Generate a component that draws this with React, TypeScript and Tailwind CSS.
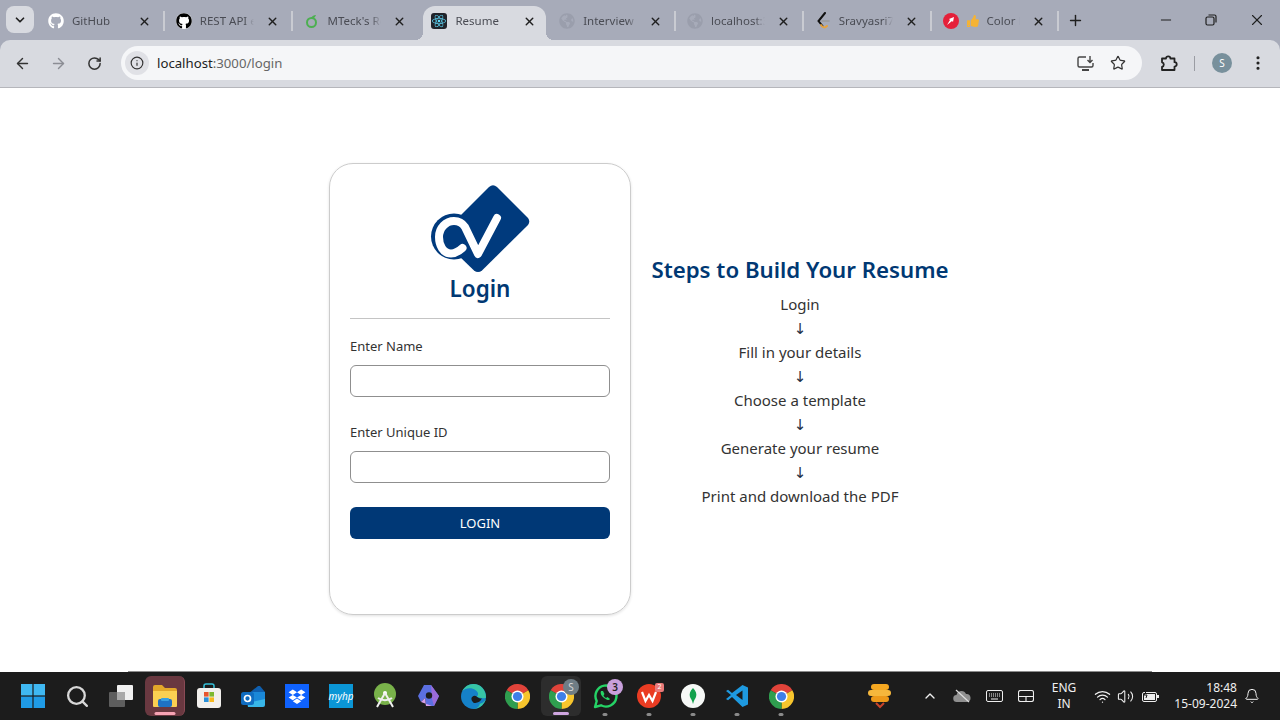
import type { ReactNode } from "react";
import { ArrowLeft, ArrowRight, RotateCw, Info, Star, X, Minus, Plus, ChevronDown, ChevronUp, Wifi, Volume2, Bell, EllipsisVertical, Search } from "lucide-react";
import { FaGithub, FaReact, FaThumbsUp, FaGlobeAmericas } from "react-icons/fa";

const GithubWhite = () => <FaGithub className="text-white" size={16} />;
const GithubDark = () => (
  <span className="flex h-4 w-4 items-center justify-center rounded-full bg-white">
    <FaGithub className="text-black" size={16} />
  </span>
);
const Sprout = () => (
  <svg width="16" height="16" viewBox="0 0 16 16" fill="none">
    <circle cx="7.5" cy="9.5" r="4.5" stroke="#4caf50" strokeWidth="2" />
    <path d="M7 5c1-2 3-3 5-3-.5 2-2 3-4 4z" fill="#4caf50" />
  </svg>
);
const ReactFav = () => (
  <span className="flex h-4 w-4 items-center justify-center rounded-[3px] bg-[#20232a]">
    <FaReact className="text-[#61dafb]" size={14} />
  </span>
);
const Globe = () => <FaGlobeAmericas className="text-[#9a9eac]" size={16} />;
const LeetCode = () => (
  <svg width="16" height="18" viewBox="0 0 16 18" fill="none">
    <path d="M10 1 3.5 9l4 5" stroke="#111" strokeWidth="2" strokeLinecap="round" />
    <path d="M7 9h7" stroke="#9a9a9a" strokeWidth="1.6" strokeLinecap="round" />
    <path d="M6 13c2 3 4 3 6 1" stroke="#e8a33d" strokeWidth="2" strokeLinecap="round" />
  </svg>
);
const RedArrow = () => (
  <svg width="16" height="16" viewBox="0 0 16 16">
    <circle cx="8" cy="8" r="8" fill="#e5203a" />
    <path d="M4 12 7 7l-1-1 5-2-1 5-1-1z" fill="#fff" />
  </svg>
);

const tabs: { title: string; icons: ReactNode[]; active?: boolean; sep?: boolean }[] = [
  { title: "GitHub", icons: [<GithubWhite key="g" />], sep: true },
  { title: "REST API endpoints", icons: [<GithubDark key="g" />], sep: true },
  { title: "MTeck's Resume", icons: [<Sprout key="s" />] },
  { title: "Resume", icons: [<ReactFav key="r" />], active: true },
  { title: "Interview Schedule", icons: [<Globe key="g" />], sep: true },
  { title: "localhost:3000/home", icons: [<Globe key="g" />], sep: true },
  { title: "Sravyasri7f - LeetCode", icons: [<LeetCode key="l" />], sep: true },
  {
    title: "Color Hunt",
    icons: [<RedArrow key="r" />, <FaThumbsUp key="t" className="text-[#f5b335]" size={12} />],
    sep: true,
  },
];

const Tab = ({ title, icons, active, sep }: (typeof tabs)[number]) => (
  <div className={active
    ? "relative ml-[3px] mr-[1.8px] flex h-[34px] w-[123px] shrink-0 items-center rounded-t-xl bg-[#d8dae0] pb-1 pl-[8px]"
    : "relative flex h-[34px] w-[127.8px] shrink-0 items-center pb-1 pl-[11px]"}>
    {active && (
      <>
        <span className="absolute bottom-0 -left-2 h-2 w-2 bg-[radial-gradient(circle_at_0_0,transparent_8px,#d8dae0_8px)]" />
        <span className="absolute bottom-0 -right-2 h-2 w-2 bg-[radial-gradient(circle_at_100%_0,transparent_8px,#d8dae0_8px)]" />
      </>
    )}
    <span className="flex shrink-0 items-center gap-2">{icons}</span>
    <span className="ml-2 min-w-0 flex-1 overflow-hidden whitespace-nowrap text-[11.5px] text-[#4a4c54] [mask-image:linear-gradient(to_right,black_82%,transparent_100%)]">
      {title}
    </span>
    <X size={13} strokeWidth={2.6} className={active ? "ml-[12px] mr-[10px] shrink-0 text-[#1f1f1f]" : "mx-[12px] shrink-0 text-[#1f1f1f]"} />
    {!active && (sep ? <span className="h-5 w-[2px] shrink-0 bg-[#c9cbd2]" /> : <span className="w-[2px] shrink-0" />)}
  </div>
);

const Chrome = () => (
  <svg width="25" height="25" viewBox="0 0 24 24">
    <path d="M12 12 1.6 6A12 12 0 0 1 22.4 6z" fill="#e0433a" />
    <path d="M12 12 22.4 6A12 12 0 0 1 12 24z" fill="#f7c52d" />
    <path d="M12 12 12 24A12 12 0 0 1 1.6 6z" fill="#2f9e4f" />
    <circle cx="12" cy="12" r="5.8" fill="#fff" />
    <circle cx="12" cy="12" r="4.4" fill="#3f7fe8" />
  </svg>
);

const icons = {
  windows: (
    <svg width="24" height="24" viewBox="0 0 24 24">
      <rect x="0" y="0" width="11.4" height="11.4" fill="#3fb8f2" />
      <rect x="12.6" y="0" width="11.4" height="11.4" fill="#3fb8f2" />
      <rect x="0" y="12.6" width="11.4" height="11.4" fill="#1f9be6" />
      <rect x="12.6" y="12.6" width="11.4" height="11.4" fill="#1f9be6" />
    </svg>
  ),
  taskView: (
    <svg width="26" height="24" viewBox="0 0 26 24">
      <rect x="9" y="1" width="16" height="15" rx="1" fill="#f0f0f0" />
      <rect x="1" y="8" width="16" height="15" rx="1" fill="#5e5e5e" />
      <rect x="9" y="8" width="8" height="8" fill="#a9a9a9" />
    </svg>
  ),
  explorer: (
    <svg width="26" height="24" viewBox="0 0 26 24">
      <path d="M1 3a2 2 0 0 1 2-2h7l3 3h10a2 2 0 0 1 2 2v4H1z" fill="#e3a72a" />
      <path d="M1 7h24v15a1 1 0 0 1-1 1H2a1 1 0 0 1-1-1z" fill="#fbd052" />
      <rect x="6" y="15" width="14" height="8" rx="2" fill="#1f72c4" />
      <rect x="9" y="14" width="8" height="3" rx="1" fill="#3aa0e0" />
    </svg>
  ),
  store: (
    <svg width="24" height="26" viewBox="0 0 24 26">
      <path d="M7 6V3a2 2 0 0 1 2-2h6a2 2 0 0 1 2 2v3" fill="none" stroke="#35c0d8" strokeWidth="1.5" />
      <rect x="0" y="5" width="24" height="20" rx="3" fill="#f1efec" />
      <rect x="7" y="9" width="4.6" height="4.6" fill="#e8552d" />
      <rect x="12.4" y="9" width="4.6" height="4.6" fill="#7cb82f" />
      <rect x="7" y="14.4" width="4.6" height="4.6" fill="#2a8fd8" />
      <rect x="12.4" y="14.4" width="4.6" height="4.6" fill="#f6b81f" />
    </svg>
  ),
  outlook: (
    <svg width="26" height="24" viewBox="0 0 26 24">
      <path d="M8 10 18 2h2l5 6v6z" fill="#0f5fae" />
      <path d="M6 12h19v9a2 2 0 0 1-2 2H8z" fill="#38b6e8" />
      <path d="M12 8h13v7l-13 3z" fill="#1a88d8" />
      <rect x="1" y="8" width="13" height="13" rx="2.5" fill="#0f6cc0" />
      <circle cx="7.5" cy="14.5" r="3" fill="none" stroke="#fff" strokeWidth="1.7" />
    </svg>
  ),
  dropbox: (
    <svg width="24" height="24" viewBox="0 0 24 24">
      <rect width="24" height="24" fill="#0f62fe" />
      <path d="m7.8 5.5 4.2 2.7-4.2 2.7-4.2-2.7zm8.4 0 4.2 2.7-4.2 2.7L12 8.2zM3.6 13.6l4.2-2.7 4.2 2.7-4.2 2.7zm12.6-2.7 4.2 2.7-4.2 2.7-4.2-2.7zM7.8 17.2l4.2-2.7 4.2 2.7-4.2 2.7z" fill="#fff" />
    </svg>
  ),
  android: (
    <svg width="24" height="26" viewBox="0 0 24 26">
      <circle cx="12" cy="11" r="11" fill="#79b24a" />
      <circle cx="12" cy="10" r="2" fill="#fff" />
      <path d="M12 10 4 24M12 10l8 14M5 15c4 3 10 3 14 0" fill="none" stroke="#f0f0f0" strokeWidth="2" />
    </svg>
  ),
  copilot: (
    <svg width="24" height="24" viewBox="0 0 24 24">
      <path d="M7 1h7l8 11-5 10H9l-1-8-4 4-3-6z" fill="#5b6fe0" />
      <path d="M14 1l8 11-5 10-2-7z" fill="#9a6bd8" />
      <path d="M4 18l4-4 1 8h6z" fill="#d8a0e8" />
      <circle cx="12" cy="11.5" r="3.2" fill="#1c1c1c" />
    </svg>
  ),
  edge: (
    <svg width="25" height="25" viewBox="0 0 24 24">
      <circle cx="12" cy="12" r="12" fill="#1581c8" />
      <path d="M24 13c0-7-5-13-12-13C7 0 3 3 1 7c3-3 9-4 13-1 3 2 3 5 1 6 3 2 9 2 9 1z" fill="#37c5a5" />
      <path d="M10 14c0-2 3-4 5-2 1 1 3 2 5 2-1 3-5 5-8 4-1-1-2-2-2-4z" fill="#1c1c1c" />
      <path d="M24 14c-1 5-6 10-12 10 2 0 6-2 6-5 2 0 5-2 6-5z" fill="#37c5a5" />
    </svg>
  ),
  whatsapp: (
    <svg width="26" height="26" viewBox="0 0 26 26" fill="none">
      <path d="M3 24l1.7-6A10.5 10.5 0 1 1 9 22.3z" stroke="#25d366" strokeWidth="2.4" strokeLinejoin="round" />
      <path d="M9 8c-1 2 0 5 3 7s5 3 6 1l-2.5-2-1.5 1c-1-.5-2-1.5-2.5-2.500l1-1.500-1.500-3z" fill="#25d366" />
    </svg>
  ),
  wps: (
    <svg width="24" height="24" viewBox="0 0 24 24">
      <circle cx="12" cy="12" r="12" fill="#ea3c23" />
      <path d="M5 8l3.5 9 3.5-6 3.5 6L19 8" fill="none" stroke="#fff" strokeWidth="2.2" />
    </svg>
  ),
  mongo: (
    <svg width="24" height="24" viewBox="0 0 24 24">
      <circle cx="12" cy="12" r="12" fill="#f6f8f6" />
      <path d="M12 4c3 3 4 6 3 9-1 2-2 3-3 7-1-4-2-5-3-7-1-3 0-6 3-9z" fill="#13a24c" />
    </svg>
  ),
  vscode: (
    <svg width="24" height="24" viewBox="0 0 24 24">
      <path d="M17.5 1 23 3.5v17L17.5 23 7 13l-4 3.2L1 15l5-4-5-4 2-1.2L7 9z" fill="#1e9ae0" />
      <path d="m17.5 6.5-6.5 4.5 6.5 5z" fill="#1c1c1c" />
    </svg>
  ),
};

const Badge = ({ children, className }: { children: ReactNode; className: string }) => (
  <span className={`absolute flex items-center justify-center rounded-full ${className}`}>{children}</span>
);

const TaskItem = ({ children, dot, active }: { children: ReactNode; dot?: boolean; active?: string }) => (
  <div className="relative flex h-full w-11 shrink-0 items-center justify-center">
    {children}
    {dot && <span className="absolute bottom-[4px] left-1/2 h-[3px] w-[5px] -translate-x-1/2 rounded-full bg-[#8a8a8a]" />}
    {active && <span className={`absolute bottom-[5px] left-1/2 h-[3px] -translate-x-1/2 rounded-full ${active}`} />}
  </div>
);

const Field = ({ label, className }: { label: string; className: string }) => (
  <div className={className}>
    <label className="block text-[13px] leading-5 text-[#333]">{label}</label>
    <input type="text" className="mt-[9px] block h-8 w-full rounded-md border border-[#8f8f8f] bg-white" />
  </div>
);

const Logo = () => (
  <svg width="110" height="96" viewBox="0 0 110 96" className="mx-auto block">
    <path d="M34 37 64 7Q68 3.5 72 7L103 38Q105.5 41.5 103 45L57 90.5Q53 93.5 49 90.5L34 76Z" fill="#003a7d" />
    <circle cx="29" cy="56.5" r="23" fill="#003a7d" />
    <path d="M37.500 68C33 72 29 73.500 26 73.500 18 73.500 14 65 14 57 14 48 21 41 29 41 34 41 38 44 40 47L53 74 72 38" fill="none" stroke="#fff" strokeWidth="8" strokeLinecap="round" strokeLinejoin="round" />
  </svg>
);

const steps = ["Login", "Fill in your details", "Choose a template", "Generate your resume", "Print and download the PDF"];

export default function App() {
  return (
    <div className="flex h-[720px] w-[1280px] flex-col overflow-hidden bg-white font-['Noto_Sans',sans-serif]">
      {/* tab strip */}
      <div className="flex h-10 shrink-0 items-end bg-[#a7abb9]">
        <div className="mb-[7px] ml-1.5 mr-[3px] flex h-[27px] w-7 shrink-0 items-center justify-center rounded-lg bg-[#d8dae0]">
          <ChevronDown size={14} strokeWidth={3} className="text-[#222]" />
        </div>
        {tabs.map((t) => (
          <Tab key={t.title} {...t} />
        ))}
        <div className="mb-[10px] ml-[6px] flex h-5 w-5 items-center justify-center">
          <Plus size={17} strokeWidth={2} className="text-[#1f1f1f]" />
        </div>
        <div className="mb-[10px] ml-auto flex h-5 items-center text-[#1f1f1f]">
          <Minus size={16} strokeWidth={1.5} className="mr-[31px]" />
          <svg width="12" height="12" viewBox="0 0 12 12" fill="none" stroke="#1f1f1f" strokeWidth="1.2" className="mr-[31px]">
            <rect x="1" y="3" width="8" height="8" rx="1.5" />
            <path d="M3.5 1h6A1.5 1.5 0 0 1 11 2.5v6" />
          </svg>
          <X size={18} strokeWidth={1.5} className="mr-[14px]" />
        </div>
      </div>

      {/* toolbar */}
      <div className="shrink-0 bg-[#a7abb9]">
        <div className="flex h-[48px] items-start rounded-t-[10px] border-b border-[#b5b6bb] bg-[#d8dae0] pt-1.5">
          <div className="flex h-[34px] w-[121px] shrink-0 items-center pl-3.5 text-[#333]">
            <ArrowLeft size={17} strokeWidth={2} className="shrink-0" />
            <ArrowRight size={17} strokeWidth={2} className="ml-[19px] shrink-0 text-[#8b8d94]" />
            <RotateCw size={15} strokeWidth={2.4} className="ml-[20px] shrink-0" />
          </div>
          <div className="flex h-[34px] w-[1021px] shrink-0 items-center rounded-full bg-[#f5f6f8] pl-1">
            <span className="flex h-[24px] w-[24px] items-center justify-center rounded-full bg-[#e0e1e6]">
              <Info size={14} strokeWidth={2} className="text-[#333]" />
            </span>
            <span className="ml-2 pt-px text-[13.2px] text-[#222]">
              localhost<span className="text-[#666]">:3000/login</span>
            </span>
            <svg width="18" height="16" viewBox="0 0 18 16" fill="none" stroke="#444" strokeWidth="1.4" className="ml-auto mr-[15px]">
              <path d="M9 2H2.5A1.5 1.5 0 0 0 1 3.500v7A1.500 1.500 0 0 0 2.500 12h12a1.500 1.500 0 0 0 1.500-1.500V8" />
              <path d="M5 15h7" strokeWidth="2" />
              <path d="M13 1v6M10.5 5 13 7.5 15.5 5" />
            </svg>
            <Star size={16} strokeWidth={1.8} className="mr-[16px] text-[#333]" />
          </div>
          <div className="flex h-[34px] flex-1 items-center pl-[18px] text-[#222]">
            <svg width="18" height="18" viewBox="0 0 18 18" fill="none" stroke="#222" strokeWidth="1.8" strokeLinejoin="round" className="shrink-0">
              <path d="M2 4.5h4a2.2 2.2 0 0 1 4.400 0h4.100v3.700a2.200 2.200 0 0 1 0 4.400v3.400H2v-3.200a2.300 2.300 0 0 0 0-4.500z" />
            </svg>
            <span className="ml-[16px] h-[15px] w-px shrink-0 bg-[#9a9ca3]" />
            <span className="ml-[17px] flex h-5 w-5 shrink-0 items-center justify-center rounded-full bg-[#78909c] text-[10px] text-white">S</span>
            <EllipsisVertical size={18} strokeWidth={2.2} className="ml-[17px] shrink-0" />
          </div>
        </div>
      </div>

      {/* page */}
      <main className="flex min-h-0 flex-1 flex-col">
        <div className="flex flex-1 justify-center gap-5 pr-[2px] pt-[75px]">
          <div className="box-border h-[452px] w-[302px] shrink-0 rounded-3xl border border-[#ccc] px-5 pt-4 shadow-[0_1px_3px_rgba(0,0,0,0.12)]">
            <Logo />
            <h1 className="-mt-px text-center text-[22.5px] font-semibold leading-7 text-[#003873]">Login</h1>
            <div className="mt-[15px] border-t border-[#c4c4c4]" />
            <Field label="Enter Name" className="mt-[17px]" />
            <Field label="Enter Unique ID" className="mt-[25px]" />
            <button className="mt-6 block h-8 w-full rounded-md bg-[#003876] pt-px text-[13px] text-white">LOGIN</button>
          </div>
          <div className="mt-[91px] w-[298px] shrink-0 text-center">
            <h2 className="whitespace-nowrap text-[22.25px] font-semibold leading-8 text-[#003873]">Steps to Build Your Resume</h2>
            <div className="mt-[6px] text-[15px] leading-6 text-[#333]">
              {steps.map((s, i) => (
                <div key={s}>
                  <p>{s}</p>
                  {i < steps.length - 1 && <p className="h-6 font-['DejaVu_Sans',sans-serif] leading-[26px] text-[#1f2f44]">↓</p>}
                </div>
              ))}
            </div>
          </div>
        </div>
        <div className="ml-32 h-px w-[1024px] shrink-0 bg-[#8c8c8c]" />
      </main>

      {/* taskbar */}
      <footer className="flex h-12 shrink-0 items-center bg-[#1c1c1c] pl-[11px] text-[#f0f0f0]">
        <TaskItem>{icons.windows}</TaskItem>
        <TaskItem>
          <Search size={25} strokeWidth={2.2} className="text-[#d8d8d8]" />
        </TaskItem>
        <TaskItem>{icons.taskView}</TaskItem>
        <TaskItem active="w-[21px] bg-[#f7a3b4]">
          <span className="flex h-10 w-10 items-center justify-center rounded-md border-r border-[#8a4a55] bg-[#693840]">{icons.explorer}</span>
        </TaskItem>
        <TaskItem>{icons.store}</TaskItem>
        <TaskItem>{icons.outlook}</TaskItem>
        <TaskItem>{icons.dropbox}</TaskItem>
        <TaskItem>
          <span className="flex h-6 w-6 items-center justify-center bg-[#0b96d6] text-[10px] italic text-white">myhp</span>
        </TaskItem>
        <TaskItem>{icons.android}</TaskItem>
        <TaskItem>{icons.copilot}</TaskItem>
        <TaskItem>{icons.edge}</TaskItem>
        <TaskItem>
          <Chrome />
        </TaskItem>
        <TaskItem active="w-[16px] bg-[#cfa6e0]">
          <span className="flex h-10 w-10 items-center justify-center rounded-md bg-[#2d2d2d]">
            <Chrome />
          </span>
          <Badge className="top-[7px] right-[4px] h-4 w-4 bg-[#6f7d85] text-[10px] text-[#d8d8d8]">S</Badge>
        </TaskItem>
        <TaskItem dot>
          {icons.whatsapp}
          <Badge className="top-[7px] right-[4px] h-4 w-4 bg-[#c9a0dc] text-[10px] font-semibold text-[#222]">3</Badge>
        </TaskItem>
        <TaskItem dot>
          {icons.wps}
          <Badge className="top-[11px] right-[7px] h-[9px] w-[9px] !rounded-[2px] bg-[#e87a7a] text-[7px] text-white">2</Badge>
        </TaskItem>
        <TaskItem dot>{icons.mongo}</TaskItem>
        <TaskItem dot>{icons.vscode}</TaskItem>
        <TaskItem dot>
          <Chrome />
        </TaskItem>

        {/* tray */}
        <div className="ml-auto mr-[7px] flex h-full items-center">
          <span className="flex w-8 justify-center">
            <svg width="24" height="26" viewBox="0 0 24 26">
              <rect x="3" y="1" width="18" height="6" rx="3" fill="#f6a821" />
              <rect x="0" y="7" width="23" height="6" rx="3" fill="#f6b73c" />
              <rect x="3" y="13" width="18" height="6" rx="3" fill="#ee9a1a" />
              <path d="m8 20 4 4 4-4" fill="none" stroke="#c8442b" strokeWidth="2" />
            </svg>
          </span>
          <span className="ml-[18px] flex w-8 justify-center">
            <ChevronUp size={16} strokeWidth={2} />
          </span>
          <span className="flex w-8 justify-center">
            <svg width="18" height="14" viewBox="0 0 18 14">
              <path d="M4 13a3.5 3.5 0 0 1-.5-7A5 5 0 0 1 13 5a4 4 0 0 1 1 8z" fill="#8f8f8f" />
              <path d="M3 1l13 12" stroke="#ddd" strokeWidth="1.2" />
            </svg>
          </span>
          <span className="flex w-8 justify-center">
            <svg width="17" height="12" viewBox="0 0 17 12" fill="none" stroke="#eee" strokeWidth="1">
              <rect x=".5" y=".5" width="16" height="11" rx="1.5" />
              <path d="M3 4h11M3 6h11" strokeDasharray="1 1" />
              <path d="M5 9h7" />
            </svg>
          </span>
          <span className="flex w-8 justify-center">
            <svg width="16" height="12" viewBox="0 0 16 12" fill="none" stroke="#eee" strokeWidth="1.1">
              <rect x=".5" y=".5" width="15" height="11" rx="2" />
              <path d="M.5 6.5h15M8 6.5v5" />
            </svg>
          </span>
          <span className="w-11 text-center text-xs leading-[16px]">
            ENG
            <br />
            IN
          </span>
          <span className="ml-1 flex w-6 justify-center">
            <Wifi size={17} strokeWidth={1.8} />
          </span>
          <span className="flex w-[23px] justify-center">
            <Volume2 size={17} strokeWidth={1.5} />
          </span>
          <span className="flex w-[26px] justify-center">
            <svg width="17" height="12" viewBox="0 0 17 12">
              <rect x=".5" y="2.5" width="14" height="9" rx="1.5" fill="none" stroke="#eee" />
              <rect x="2" y="4" width="11" height="6" fill="#eee" />
              <rect x="15" y="5" width="2" height="3" fill="#eee" />
              <path d="M5 0 2 5h3l-1 3" fill="none" stroke="#1c1c1c" strokeWidth="1" />
            </svg>
          </span>
          <span className="w-[74px] whitespace-nowrap text-right text-xs leading-4">
            18:48
            <br />
            15-09-2024
          </span>
          <span className="ml-[7px] mr-[13px] flex w-4 justify-center">
            <Bell size={16} strokeWidth={1.5} />
          </span>
        </div>
      </footer>
    </div>
  );
}
